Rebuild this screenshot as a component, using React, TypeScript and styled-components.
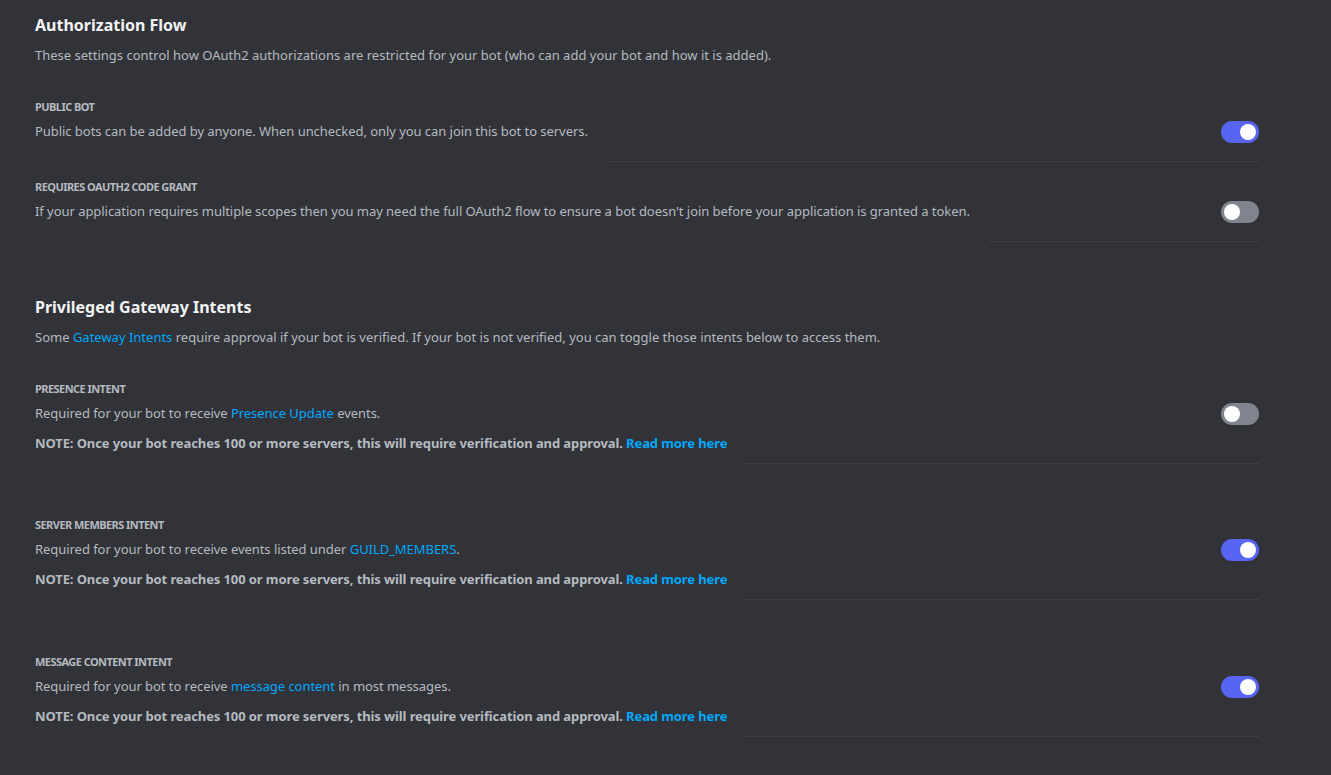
import React from 'react';
import styled, { createGlobalStyle } from 'styled-components';

const GlobalStyle = createGlobalStyle`
  html, body {
    margin: 0;
    padding: 0;
    background: #313338;
  }
  body {
    font-family: 'Noto Sans', 'Liberation Sans', sans-serif;
    color: #b5bac1;
  }
`;

const Page = styled.div`
  min-height: 775px;
  padding: 15px 72px 0 35px;
  box-sizing: border-box;
  background: #313338;
`;

const Section = styled.section<{ $top?: number }>`
  margin-top: ${(p) => p.$top ?? 0}px;
`;

const Title = styled.h2`
  margin: 0;
  font-size: 16px;
  line-height: 20px;
  font-weight: 700;
  color: #f2f3f5;
`;

const Subtitle = styled.p`
  margin: 10px 0 0;
  font-size: 13px;
  line-height: 20px;
  color: #b5bac1;
`;

const Row = styled.div<{ $top: number }>`
  display: flex;
  margin-top: ${(p) => p.$top}px;
`;

const TextCol = styled.div<{ $bottom: number }>`
  flex: 0 1 auto;
  padding-bottom: ${(p) => p.$bottom}px;
`;

const Label = styled.div`
  font-size: 11px;
  line-height: 16px;
  font-weight: 700;
  text-transform: uppercase;
  color: #b5bac1;
  letter-spacing: -0.55px;
`;

const Desc = styled.div`
  margin-top: 6px;
  font-size: 13px;
  line-height: 20px;
  letter-spacing: -0.05px;
  color: #b5bac1;
`;

const Note = styled.div`
  margin-top: 10px;
  font-size: 13px;
  line-height: 20px;
  font-weight: 700;
  letter-spacing: -0.1px;
  color: #b5bac1;
`;

const Link = styled.a<{ $bold?: boolean }>`
  color: #00a8fc;
  text-decoration: none;
  font-weight: ${(p) => (p.$bold ? 700 : 400)};
  cursor: pointer;
`;

const Right = styled.div`
  flex: 1;
  margin-left: 19px;
  border-bottom: 1px solid #3f4147;
  display: flex;
  justify-content: flex-end;
  align-items: flex-start;
  padding-top: 22px;
`;

const Switch = styled.div<{ $on: boolean }>`
  position: relative;
  width: 38px;
  height: 22px;
  border-radius: 11px;
  background: ${(p) => (p.$on ? '#5865f2' : '#80848e')};
  flex-shrink: 0;
  cursor: pointer;

  &::after {
    content: '';
    position: absolute;
    top: 3px;
    left: ${(p) => (p.$on ? '19px' : '3px')};
    width: 16px;
    height: 16px;
    border-radius: 50%;
    background: #fff;
  }
`;

const noteText =
  'NOTE: Once your bot reaches 100 or more servers, this will require verification and approval. ';

type Setting = {
  label: string;
  desc: React.ReactNode;
  on: boolean;
  note?: boolean;
};

const authSettings: Setting[] = [
  {
    label: 'Public Bot',
    desc: 'Public bots can be added by anyone. When unchecked, only you can join this bot to servers.',
    on: true,
  },
  {
    label: 'Requires OAuth2 Code Grant',
    desc: "If your application requires multiple scopes then you may need the full OAuth2 flow to ensure a bot doesn't join before your application is granted a token.",
    on: false,
  },
];

const intents: Setting[] = [
  {
    label: 'Presence Intent',
    desc: (
      <>
        Required for your bot to receive <Link>Presence Update</Link> events.
      </>
    ),
    on: false,
    note: true,
  },
  {
    label: 'Server Members Intent',
    desc: (
      <>
        Required for your bot to receive events listed under <Link>GUILD_MEMBERS</Link>.
      </>
    ),
    on: true,
    note: true,
  },
  {
    label: 'Message Content Intent',
    desc: (
      <>
        Required for your bot to receive <Link>message content</Link> in most messages.
      </>
    ),
    on: true,
    note: true,
  },
];

const authGaps = [34, 17];
const intentGaps = [34, 53, 54];

const SettingRow = ({ s, top }: { s: Setting; top: number }) => (
  <Row $top={top}>
    <TextCol $bottom={s.note ? 11 : 21}>
      <Label>{s.label}</Label>
      <Desc>{s.desc}</Desc>
      {s.note && (
        <Note>
          {noteText}
          <Link $bold>Read more here</Link>
        </Note>
      )}
    </TextCol>
    <Right>
      <Switch $on={s.on} />
    </Right>
  </Row>
);

const App = () => {
  return (
    <>
      <GlobalStyle />
      <Page>
        <Section>
          <Title>Authorization Flow</Title>
          <Subtitle>
            These settings control how OAuth2 authorizations are restricted for your bot (who can
            add your bot and how it is added).
          </Subtitle>
          {authSettings.map((s, i) => (
            <SettingRow key={s.label} s={s} top={authGaps[i]} />
          ))}
        </Section>
        <Section $top={55}>
          <Title>Privileged Gateway Intents</Title>
          <Subtitle>
            Some <Link>Gateway Intents</Link> require approval if your bot is verified. If your bot
            is not verified, you can toggle those intents below to access them.
          </Subtitle>
          {intents.map((s, i) => (
            <SettingRow key={s.label} s={s} top={intentGaps[i]} />
          ))}
        </Section>
      </Page>
    </>
  );
};

export default App;
